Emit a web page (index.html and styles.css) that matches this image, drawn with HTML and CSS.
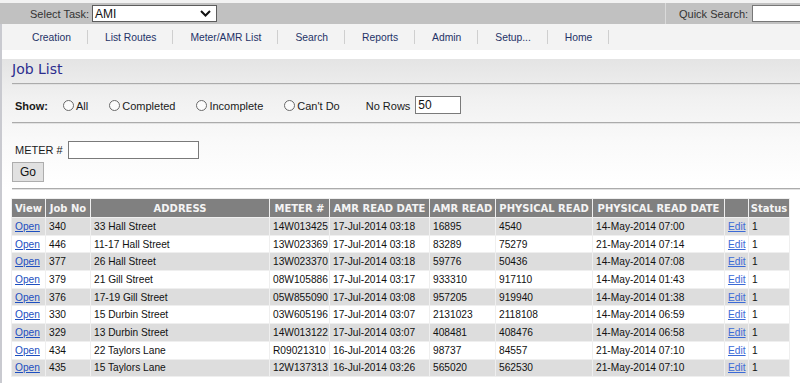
FILE: index.html
```html
<!DOCTYPE html>
<html lang="en">
<head>
<meta charset="utf-8">
<title>Job List</title>
<link rel="stylesheet" href="styles.css">
</head>
<body>
<div class="topstrip"></div>
<header class="taskbar">
  <div class="task">
    <span class="task-label">Select Task:</span>
    <div class="select">
      <span>AMI</span>
      <svg class="chev" width="11" height="7" viewBox="0 0 11 7"><path d="M1 1 L5.5 5.5 L10 1" fill="none" stroke="#111" stroke-width="2"/></svg>
    </div>
  </div>
  <div class="quick">
    <span class="quick-label">Quick Search:</span>
    <input class="quick-input" type="text">
  </div>
</header>
<div class="page">
  <nav class="nav">
    <ul>
      <li><a href="#">Creation</a></li>
      <li><a href="#">List Routes</a></li>
      <li><a href="#">Meter/AMR List</a></li>
      <li><a href="#">Search</a></li>
      <li><a href="#">Reports</a></li>
      <li><a href="#">Admin</a></li>
      <li><a href="#">Setup...</a></li>
      <li><a href="#">Home</a></li>
    </ul>
  </nav>
  <main class="content">
    <h1 class="title">Job List</h1>
    <hr class="rule">
    <div class="show-row">
      <span class="show-label">Show:</span>
      <label class="opt"><input type="radio" name="show">All</label>
      <label class="opt"><input type="radio" name="show">Completed</label>
      <label class="opt"><input type="radio" name="show">Incomplete</label>
      <label class="opt"><input type="radio" name="show">Can't Do</label>
      <span class="rows-label">No Rows</span>
      <input class="rows-input" type="text" value="50">
    </div>
    <hr class="rule">
    <div class="meter-row">
      <span class="meter-label">METER #</span>
      <input class="meter-input" type="text">
    </div>
    <button class="go" type="button">Go</button>
    <hr class="rule rule-last">
    <table class="jobs">
      <colgroup>
        <col class="c-view"><col class="c-job"><col class="c-addr"><col class="c-meter"><col class="c-amrdate"><col class="c-amr"><col class="c-phys"><col class="c-physdate"><col class="c-edit"><col class="c-status">
      </colgroup>
      <thead>
        <tr><th>View</th><th>Job No</th><th>ADDRESS</th><th>METER #</th><th>AMR READ DATE</th><th>AMR READ</th><th>PHYSICAL READ</th><th>PHYSICAL READ DATE</th><th></th><th>Status</th></tr>
      </thead>
      <tbody>
        <tr><td><a class="open" href="#">Open</a></td><td>340</td><td>33 Hall Street</td><td>14W013425</td><td>17-Jul-2014 03:18</td><td>16895</td><td>4540</td><td>14-May-2014 07:00</td><td><a class="edit" href="#">Edit</a></td><td>1</td></tr>
        <tr><td><a class="open" href="#">Open</a></td><td>446</td><td>11-17 Hall Street</td><td>13W023369</td><td>17-Jul-2014 03:18</td><td>83289</td><td>75279</td><td>21-May-2014 07:14</td><td><a class="edit" href="#">Edit</a></td><td>1</td></tr>
        <tr><td><a class="open" href="#">Open</a></td><td>377</td><td>26 Hall Street</td><td>13W023370</td><td>17-Jul-2014 03:18</td><td>59776</td><td>50436</td><td>14-May-2014 07:08</td><td><a class="edit" href="#">Edit</a></td><td>1</td></tr>
        <tr><td><a class="open" href="#">Open</a></td><td>379</td><td>21 Gill Street</td><td>08W105886</td><td>17-Jul-2014 03:17</td><td>933310</td><td>917110</td><td>14-May-2014 01:43</td><td><a class="edit" href="#">Edit</a></td><td>1</td></tr>
        <tr><td><a class="open" href="#">Open</a></td><td>376</td><td>17-19 Gill Street</td><td>05W855090</td><td>17-Jul-2014 03:08</td><td>957205</td><td>919940</td><td>14-May-2014 01:38</td><td><a class="edit" href="#">Edit</a></td><td>1</td></tr>
        <tr><td><a class="open" href="#">Open</a></td><td>330</td><td>15 Durbin Street</td><td>03W605196</td><td>17-Jul-2014 03:07</td><td>2131023</td><td>2118108</td><td>14-May-2014 06:59</td><td><a class="edit" href="#">Edit</a></td><td>1</td></tr>
        <tr><td><a class="open" href="#">Open</a></td><td>329</td><td>13 Durbin Street</td><td>14W013122</td><td>17-Jul-2014 03:07</td><td>408481</td><td>408476</td><td>14-May-2014 06:58</td><td><a class="edit" href="#">Edit</a></td><td>1</td></tr>
        <tr><td><a class="open" href="#">Open</a></td><td>434</td><td>22 Taylors Lane</td><td>R09021310</td><td>16-Jul-2014 03:26</td><td>98737</td><td>84557</td><td>21-May-2014 07:10</td><td><a class="edit" href="#">Edit</a></td><td>1</td></tr>
        <tr><td><a class="open" href="#">Open</a></td><td>435</td><td>15 Taylors Lane</td><td>12W137313</td><td>16-Jul-2014 03:26</td><td>565020</td><td>562530</td><td>21-May-2014 07:10</td><td><a class="edit" href="#">Edit</a></td><td>1</td></tr>
      </tbody>
    </table>
  </main>
</div>
</body>
</html>
```

FILE: styles.css
```css
html, body {
  margin: 0;
  padding: 0;
  height: 383px;
  overflow: hidden;
  background: #ffffff;
  font-family: "Liberation Sans", Arial, sans-serif;
  color: #222;
}

.topstrip {
  height: 3px;
  background: #f2f2f2;
}

.taskbar {
  display: flex;
  height: 21px;
  background: #c1c1c1;
}

.task {
  display: flex;
  align-items: center;
  padding-left: 30px;
}

.task-label {
  font-size: 11px;
  color: #333;
}

.select {
  display: flex;
  align-items: center;
  justify-content: space-between;
  box-sizing: border-box;
  width: 125px;
  height: 17px;
  margin: 0 0 0 3px;
  padding: 0 5px 0 2px;
  background: #fff;
  border: 1px solid #5c5c5c;
  font-size: 12px;
  color: #111;
}

.chev {
  display: block;
}

.quick {
  display: flex;
  align-items: center;
  margin-left: auto;
  width: 135px;
  padding-left: 13px;
  border-left: 1px solid #dadada;
  box-sizing: border-box;
  flex-shrink: 0;
}

.quick-label {
  font-size: 11px;
  color: #333;
  white-space: nowrap;
}

.quick-input {
  box-sizing: border-box;
  width: 60px;
  height: 17px;
  margin: 0 0 0 4px;
  padding: 0;
  border: 1px solid #777;
  background: #fff;
  flex-shrink: 0;
}

.page {
  border-left: 2px solid #c9cad0;
  height: 359px;
}

.nav {
  height: 26px;
  background: #f3f3f3;
  display: flex;
  align-items: center;
}

.nav ul {
  display: flex;
  margin: 0;
  padding: 0 0 0 13px;
  list-style: none;
}

.nav li {
  padding: 0 16px 0 17px;
  border-right: 1px solid #cfcfcf;
  line-height: 12px;
}

.nav a {
  font-size: 10.3px;
  color: #1e3267;
  text-decoration: none;
}

.content {
  padding-left: 10px;
  background: linear-gradient(to bottom, #e4e4e4 0px, #f1f1f1 40px, #f9f9f9 80px, #ffffff 130px);
  height: 333px;
}

.title {
  margin: 9px 0 0 0;
  font-family: "DejaVu Sans", Verdana, sans-serif;
  font-size: 14px;
  line-height: 20px;
  font-weight: normal;
  color: #2d2d8e;
}

.rule {
  height: 0;
  margin: 4px 0 0 0;
  border: 0;
  border-top: 1px solid #ababab;
  border-bottom: 1px solid #e2e2e2;
}

.show-row {
  display: flex;
  align-items: center;
  box-sizing: border-box;
  height: 37px;
  padding: 4px 0 0 3px;
  font-size: 11px;
  color: #1a1a1a;
}

.show-row + .rule {
  margin-top: 0;
}

.show-label {
  font-weight: bold;
  margin-right: 15px;
}

.opt {
  display: flex;
  align-items: center;
  margin-right: 21px;
}

.opt input {
  appearance: none;
  -webkit-appearance: none;
  box-sizing: border-box;
  width: 11px;
  height: 11px;
  margin: 0 2px 0 0;
  border: 1px solid #6a6a6a;
  border-radius: 50%;
  background: #fbfbfb;
}

.rows-label {
  margin-left: 5px;
}

.rows-input {
  box-sizing: border-box;
  width: 46px;
  height: 18px;
  margin: -2px 0 0 5px;
  padding: 0 2px;
  border: 1px solid #7a7a7a;
  background: #fff;
  font-family: "Liberation Sans", Arial, sans-serif;
  font-size: 12px;
  color: #111;
}

.meter-row {
  display: flex;
  align-items: center;
  height: 18px;
  margin-top: 17px;
  padding-left: 3px;
}

.meter-label {
  font-size: 11px;
  color: #1a1a1a;
}

.meter-input {
  box-sizing: border-box;
  width: 131px;
  height: 18px;
  margin: 0 0 0 5px;
  padding: 0;
  border: 1px solid #7a7a7a;
  background: #fff;
}

.go {
  display: block;
  box-sizing: border-box;
  width: 32px;
  height: 20px;
  margin: 3px 0 0 0;
  padding: 0;
  border: 1px solid #adadad;
  background: #e1e1e1;
  font-family: "Liberation Sans", Arial, sans-serif;
  font-size: 12px;
  color: #111;
}

.rule-last {
  margin-top: 6px;
}

.jobs {
  margin: 8px 0 0 -1px;
  border-collapse: separate;
  border-spacing: 1px;
  background: #efefef;
  table-layout: fixed;
  font-size: 10.2px;
}

.c-view { width: 33px; }
.c-job { width: 44px; }
.c-addr { width: 178px; }
.c-meter { width: 59px; }
.c-amrdate { width: 99px; }
.c-amr { width: 65px; }
.c-phys { width: 96px; }
.c-physdate { width: 131px; }
.c-edit { width: 23px; }
.c-status { width: 40px; }

.jobs th {
  height: 18px;
  padding: 0;
  background: #808080;
  color: #f4f4f4;
  font-family: "DejaVu Sans", Verdana, sans-serif;
  font-size: 10px;
  font-weight: bold;
  text-align: center;
  white-space: nowrap;
  overflow: hidden;
}

.jobs td {
  height: 16.7px;
  padding: 0 0 0 3px;
  white-space: nowrap;
  overflow: hidden;
  color: #111;
  vertical-align: middle;
}

.jobs tbody tr:nth-child(odd) td {
  background: #dddddd;
}

.jobs tbody tr:nth-child(even) td {
  background: #ffffff;
}

.open {
  color: #1d4fc0;
  text-decoration: underline;
}

.edit {
  color: #3b6ad6;
  text-decoration: underline;
}
```
